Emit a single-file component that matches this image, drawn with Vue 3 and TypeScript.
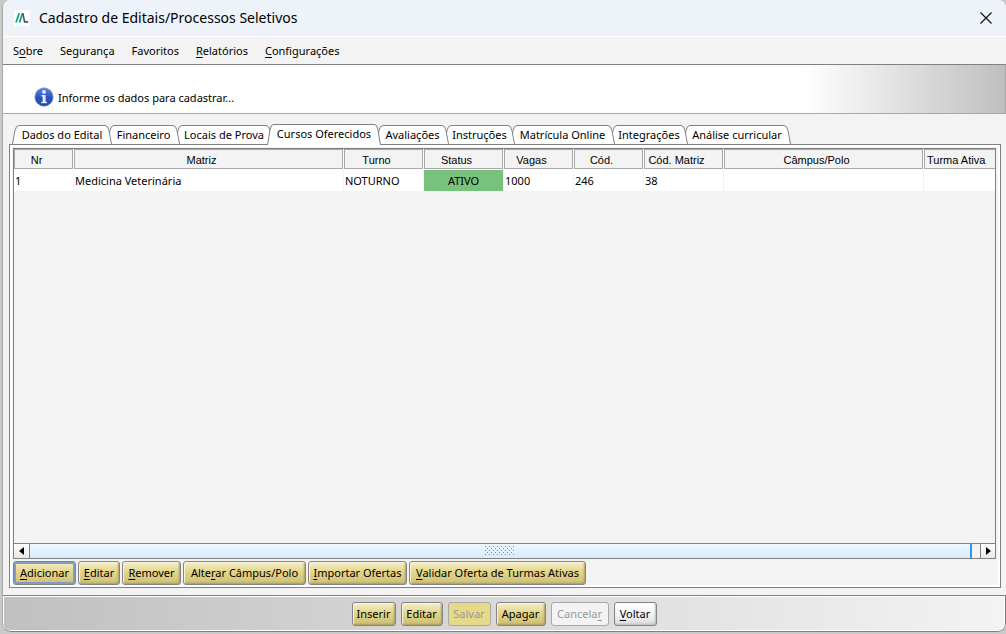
<script setup lang="ts">
import { ref } from 'vue'

interface Label { text: string; key?: number }
interface Tab { text: string; width: number }
interface Action extends Label { width: number; plain?: boolean; disabled?: boolean }
interface Column { text: string; width?: number }

const menus: Label[] = [
  { text: 'Sobre', key: 1 },
  { text: 'Segurança' },
  { text: 'Favoritos' },
  { text: 'Relatórios', key: 0 },
  { text: 'Configurações', key: 0 },
]

const tabs: Tab[] = [
  { text: 'Dados do Edital', width: 100 },
  { text: 'Financeiro', width: 73 },
  { text: 'Locais de Prova', width: 98 },
  { text: 'Cursos Oferecidos', width: 114 },
  { text: 'Avaliações', width: 73 },
  { text: 'Instruções', width: 71 },
  { text: 'Matrícula Online', width: 105 },
  { text: 'Integrações', width: 78 },
  { text: 'Análise curricular', width: 108 },
]
const selected = ref(3)

const columns: Column[] = [
  { text: 'Nr', width: 60 },
  { text: 'Matriz', width: 270 },
  { text: 'Turno', width: 80 },
  { text: 'Status', width: 80 },
  { text: 'Vagas', width: 70 },
  { text: 'Cód.', width: 70 },
  { text: 'Cód. Matriz', width: 80 },
  { text: 'Câmpus/Polo', width: 200 },
  { text: 'Turma Ativa' },
]
const rows: string[][] = [['1', 'Medicina Veterinária', 'NOTURNO', 'ATIVO', '1000', '246', '38', '', '']]

const rowActions: Action[] = [
  { text: 'Adicionar', key: 0, width: 63 },
  { text: 'Editar', key: 0, width: 42 },
  { text: 'Remover', key: 0, width: 59 },
  { text: 'Alterar Câmpus/Polo', key: 4, width: 123 },
  { text: 'Importar Ofertas', key: 0, width: 99 },
  { text: 'Validar Oferta de Turmas Ativas', key: 0, width: 177 },
]
const formActions: Action[] = [
  { text: 'Inserir', width: 44 },
  { text: 'Editar', width: 42 },
  { text: 'Salvar', width: 43, disabled: true },
  { text: 'Apagar', width: 50 },
  { text: 'Cancelar', key: 7, width: 58, plain: true, disabled: true },
  { text: 'Voltar', key: 0, width: 43, plain: true },
]

function parts(l: Label): [string, string, string] {
  if (l.key === undefined) return [l.text, '', '']
  return [l.text.slice(0, l.key), l.text.charAt(l.key), l.text.slice(l.key + 1)]
}
</script>

<template>
  <div class="desktop">
    <div class="window">
      <header class="titlebar">
        <svg class="logo" width="16" height="16" viewBox="0 0 16 16" aria-hidden="true">
          <rect width="16" height="16" rx="2" fill="#fff" />
          <path d="M2 12.5 5.2 3.2M5.4 12.5 8.6 3.2" stroke="#12a187" stroke-width="1.8" fill="none" />
          <path d="M8.8 3.2 10.6 11.9H14.2" stroke="#4b565c" stroke-width="1.6" fill="none" />
        </svg>
        <h1>Cadastro de Editais/Processos Seletivos</h1>
        <button class="close" aria-label="Fechar">
          <svg width="12" height="12" viewBox="0 0 12 12"><path d="M.5.5l11 11M11.5.5l-11 11" stroke="#111" stroke-width="1.2" /></svg>
        </button>
      </header>

      <nav class="menubar">
        <button v-for="m in menus" :key="m.text">{{ parts(m)[0] }}<u>{{ parts(m)[1] }}</u>{{ parts(m)[2] }}</button>
      </nav>

      <section class="banner">
        <svg width="20" height="20" viewBox="0 0 20 20" aria-hidden="true">
          <defs>
            <linearGradient id="info" x1="0" y1="0" x2="0" y2="1">
              <stop offset="0" stop-color="#6288dc" />
              <stop offset=".5" stop-color="#2c55c0" />
              <stop offset="1" stop-color="#1f45b4" />
            </linearGradient>
          </defs>
          <circle cx="10" cy="10" r="9.2" fill="url(#info)" stroke="#7f93cf" stroke-width=".6" />
          <circle cx="10" cy="4.9" r="1.9" fill="#e4ebfa" />
          <path d="M7.4 8h4.2v6.8h1.5v1.5H7.2v-1.5h1.5V9.5H7.4z" fill="#e4ebfa" />
        </svg>
        <p>Informe os dados para cadastrar...</p>
      </section>

      <main class="content">
        <div class="tabs" role="tablist">
          <button
            v-for="(t, i) in tabs"
            :key="t.text"
            class="tab"
            :class="{ active: i === selected }"
            role="tab"
            :aria-selected="i === selected"
            :style="{ width: t.width + 'px', zIndex: i === selected ? 20 : 10 - i }"
            @click="selected = i"
          >
            <svg width="7" height="20" viewBox="0 0 7 20" preserveAspectRatio="none" aria-hidden="true">
              <path d="M.5 20 3 6Q4 .5 7 .5V20z" fill="#fff" />
              <path d="M.5 20 3 6Q4 .5 7 .5" fill="none" stroke="#808080" />
            </svg>
            <span>{{ t.text }}</span>
            <svg width="7" height="20" viewBox="0 0 7 20" preserveAspectRatio="none" aria-hidden="true">
              <path d="M0 .5Q3 .5 4 6L6.5 20H0z" fill="#fff" />
              <path d="M0 .5Q3 .5 4 6L6.5 20" fill="none" stroke="#808080" />
            </svg>
          </button>
        </div>

        <div class="panel">
          <div class="grid">
            <div class="viewport">
              <table>
                <colgroup>
                  <col v-for="c in columns" :key="c.text" :style="c.width ? { width: c.width + 'px' } : {}" />
                </colgroup>
                <thead>
                  <tr><th v-for="c in columns" :key="c.text"><div>{{ c.text }}</div></th></tr>
                </thead>
                <tbody>
                  <tr v-for="r in rows" :key="r[0]">
                    <td v-for="(v, i) in r" :key="i" :class="{ status: i === 3 }">{{ v }}</td>
                  </tr>
                </tbody>
              </table>
            </div>
            <div class="scrollbar">
              <button aria-label="Rolar para a esquerda"><svg width="5" height="8" viewBox="0 0 5 8"><path d="M5 0v8L0 4z" /></svg></button>
              <div class="thumb">
                <svg width="30" height="10" aria-hidden="true">
                  <defs>
                    <pattern id="grip" width="4" height="4" patternUnits="userSpaceOnUse">
                      <path d="M0 0h1v1H0zM2 2h1v1H2z" fill="#3b9bf5" />
                    </pattern>
                  </defs>
                  <rect width="30" height="10" fill="url(#grip)" />
                </svg>
              </div>
              <button aria-label="Rolar para a direita"><svg width="5" height="8" viewBox="0 0 5 8"><path d="M0 0v8l5-4z" /></svg></button>
            </div>
          </div>
          <div class="actions">
            <button
              v-for="(a, i) in rowActions"
              :key="a.text"
              class="btn"
              :class="{ focused: i === 0 }"
              :style="{ width: a.width + 'px' }"
            >{{ parts(a)[0] }}<u>{{ parts(a)[1] }}</u>{{ parts(a)[2] }}</button>
          </div>
        </div>
      </main>

      <footer class="footer">
        <button
          v-for="a in formActions"
          :key="a.text"
          class="btn"
          :class="{ plain: a.plain }"
          :disabled="a.disabled"
          :style="{ width: a.width + 'px' }"
        >{{ parts(a)[0] }}<u>{{ parts(a)[1] }}</u>{{ parts(a)[2] }}</button>
      </footer>
    </div>
  </div>
</template>

<style>
body { margin: 0; }
</style>

<style scoped>
* { box-sizing: border-box; }
.desktop {
  display: flex;
  height: 100vh;
  padding: 0 0 2px 2px;
  overflow: hidden;
  background: #c9c9c9;
  color: #000;
  font: 11px/16px "Noto Sans", "Open Sans", sans-serif;
}
button {
  margin: 0;
  padding: 0;
  border: 0;
  background: none;
  color: inherit;
  font: inherit;
  white-space: nowrap;
}
u { text-underline-offset: 2px; }
.window {
  flex: 1;
  min-width: 0;
  display: flex;
  flex-direction: column;
  border-left: 1px solid #a8a8a8;
  border-radius: 8px;
  overflow: hidden;
  background: #f3f3f3;
}
.titlebar {
  display: flex;
  align-items: center;
  height: 37px;
  padding: 0 14px 0 11px;
  border-bottom: 1px solid #fff;
  background: #eef3f9;
}
h1 {
  flex: 1;
  margin: 0 0 0 9px;
  font-size: 14px;
  line-height: 20px;
  font-weight: 400;
}
.close { display: flex; }
.menubar {
  display: flex;
  align-items: center;
  gap: 17px;
  height: 27px;
  padding: 0 10px;
}
.banner {
  display: flex;
  align-items: flex-end;
  gap: 4px;
  height: 50px;
  padding: 0 32px 6px 31px;
  border: solid #a8a8a8;
  border-width: 1px 1px 1px 0;
  border-top-color: #808080;
  background: linear-gradient(90deg, #fff 80%, #bfbfbf);
}
.banner p { margin: 0 0 1px; }
.content {
  flex: 1;
  display: flex;
  flex-direction: column;
  min-height: 0;
  padding: 9px 5px 7px 6px;
}
.tabs {
  display: flex;
  align-items: flex-end;
  height: 21px;
  padding-left: 3px;
  position: relative;
  z-index: 1;
}
.tab {
  position: relative;
  display: flex;
  flex: none;
  height: 19px;
  margin-right: -5px;
}
.tab svg { flex: none; height: 100%; }
.tab span {
  flex: 1;
  display: flex;
  justify-content: center;
  min-width: 0;
  height: 100%;
  padding-top: 1px;
  border-top: 1px solid #808080;
  background: #fff;
}
.tab.active { height: 21px; margin-left: -1px; margin-bottom: -1px; }
.panel {
  flex: 1;
  display: flex;
  flex-direction: column;
  min-height: 0;
  padding: 3px 4px 2px 3px;
  border: 1px solid #808080;
  box-shadow: inset 0 0 0 2px #fff;
}
.grid {
  flex: 1;
  display: flex;
  flex-direction: column;
  min-height: 0;
  border: 1px solid #808080;
}
.viewport { flex: 1; overflow: hidden; }
table {
  width: 100%;
  table-layout: fixed;
  border-collapse: separate;
  border-spacing: 0;
  background: #fff;
}
th { height: 21px; padding: 0 1px 1px 0; }
th div {
  height: 20px;
  padding-right: 14px;
  border: 1px solid #a8a8a8;
  background: #f3f3f3;
  font: 400 11px/20px "Liberation Sans", Arial, sans-serif;
  text-align: center;
  white-space: nowrap;
}
th:last-child { padding-right: 0; }
th:last-child div { padding: 0 0 0 2px; border-right: 0; text-align: left; }
td {
  height: 21px;
  padding: 0 1px;
  border-right: 1px solid #f3f3f3;
  white-space: nowrap;
}
td:last-child { border-right: 0; }
.status { background: #78c27e; text-align: center; }
.scrollbar {
  display: flex;
  height: 15px;
  border-top: 1px solid #808080;
}
.scrollbar button {
  display: flex;
  align-items: center;
  justify-content: center;
  width: 15px;
  background: linear-gradient(#fff, #e8e8e8);
}
.scrollbar button:last-child { border-left: 1px solid #808080; }
.thumb {
  flex: 1;
  display: flex;
  align-items: center;
  justify-content: center;
  margin: -1px 8px 0 0;
  border: solid #2f96f3;
  border-width: 1px 2px 0 1px;
  background: linear-gradient(#eef7fe, #d8ebfb);
}
.actions { display: flex; gap: 2px; margin-top: 2px; }
.btn {
  flex: none;
  height: 24px;
  border: 1px solid #858585;
  border-radius: 3px;
  background: linear-gradient(#f5eecb, #e3d588 45%, #cdbf76);
  box-shadow: inset 1px 1px 1px #fbf6dd, inset -1px -1px 2px #a99d60;
  line-height: 22px;
}
.btn.focused { box-shadow: inset 0 0 0 2px #7f9dc4; }
.btn.plain {
  background: linear-gradient(#fff, #f4f4f6 50%, #dcdcde);
  box-shadow: inset -1px -1px 2px #bbb;
}
.btn:disabled {
  border-color: #a8a8a8;
  background: #e6d987;
  box-shadow: none;
  color: #9a9a9a;
}
.btn.plain:disabled { background: #f3f3f3; }
.footer {
  display: flex;
  align-items: center;
  justify-content: center;
  gap: 5px;
  height: 37px;
  border: 1px solid #808080;
  border-left: 0;
  border-radius: 0 0 8px 8px;
  background: linear-gradient(90deg, #c0c0c0, #f3f3f3);
  box-shadow: inset 1px 1px 0 #fff, inset -1px -1px 0 #fff;
}
</style>
